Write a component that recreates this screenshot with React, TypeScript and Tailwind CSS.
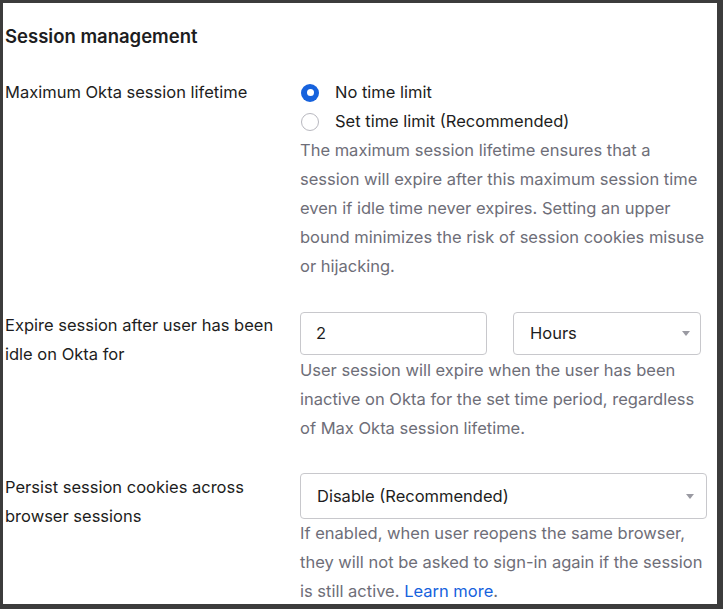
import React from "react";

function Arrow() {
  return (
    <svg width="8" height="5" viewBox="0 0 8 5" className="shrink-0">
      <path d="M0 0 L8 0 L4 5 Z" fill="#9a9aa2" />
    </svg>
  );
}

export default function App() {
  return (
    <div
      className="h-[609px] w-[723px] border-l-[3px] border-t-[3px] border-r-[6px] border-b-[5px] border-[#3c3c3c] bg-white overflow-hidden text-[#1d1d21]"
      style={{ fontFamily: "Inter, 'Noto Sans', sans-serif" }}
    >
      <div className="pl-[2px] pt-[21px]">
        <h2 className="text-[18.5px] leading-[24px] font-semibold">Session management</h2>

        <div className="mt-[30px] grid grid-cols-[295px_407px]">
          <div className="text-[16.5px] leading-[29px] pr-6">Maximum Okta session lifetime</div>
          <div>
            <div className="flex items-center h-[29px] text-[16.5px]">
              <span className="w-[18px] h-[18px] rounded-full bg-[#1662dd] flex items-center justify-center ml-[1px]">
                <span className="w-[7px] h-[7px] rounded-full bg-white" />
              </span>
              <span className="ml-[16px]">No time limit</span>
            </div>
            <div className="flex items-center h-[29px] text-[16.5px]">
              <span className="w-[18px] h-[18px] rounded-full border-[1.5px] border-[#b8b8bf] bg-white ml-[1px]" />
              <span className="ml-[16px]">Set time limit (Recommended)</span>
            </div>
            <p className="text-[16.5px] leading-[29px] text-[#6e6e78]">
              The maximum session lifetime ensures that a session will expire after this maximum session time even if idle time never expires. Setting an upper bound minimizes the risk of session cookies misuse or hijacking.
            </p>
          </div>
        </div>

        <div className="mt-[30px] grid grid-cols-[295px_407px]">
          <div className="text-[16.5px] leading-[29px] pr-6">Expire session after user has been idle on Okta for</div>
          <div>
            <div className="flex gap-[26px] mt-[1px]">
              <div className="w-[187px] h-[43px] rounded-[4px] border border-[#c8c8cc] flex items-center px-[15px] text-[16.5px]">2</div>
              <div className="w-[188px] h-[43px] rounded-[4px] border border-[#c8c8cc] flex items-center justify-between pl-[16px] pr-[10px] text-[16.5px]">
                <span>Hours</span>
                <Arrow />
              </div>
            </div>
            <p className="mt-[1px] text-[16.5px] leading-[29px] text-[#6e6e78]">
              User session will expire when the user has been inactive on Okta for the set time period, regardless of Max Okta session lifetime.
            </p>
          </div>
        </div>

        <div className="mt-[30px] grid grid-cols-[295px_407px]">
          <div className="text-[16.5px] leading-[29px] pr-6">Persist session cookies across browser sessions</div>
          <div>
            <div className="w-[407px] h-[46px] rounded-[4px] border border-[#c8c8cc] flex items-center justify-between pl-[16px] pr-[12px] text-[16.5px]">
              <span>Disable (Recommended)</span>
              <Arrow />
            </div>
            <p className="text-[16.5px] leading-[29px] text-[#6e6e78]">
              If enabled, when user reopens the same browser, they will not be asked to sign-in again if the session is still active. <a className="text-[#1662dd]">Learn more</a>.
            </p>
          </div>
        </div>
      </div>
    </div>
  );
}
